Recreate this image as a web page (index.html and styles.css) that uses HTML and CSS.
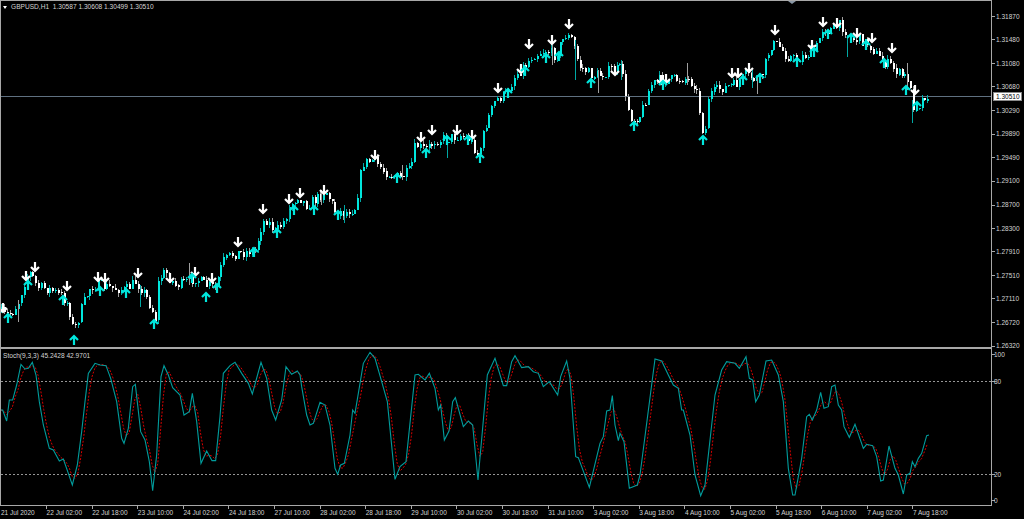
FILE: index.html
```html
<!DOCTYPE html>
<html lang="en">
<head>
    <meta charset="UTF-8">
    <title>GBPUSD,H1</title>
    <link rel="stylesheet" href="styles.css">
</head>
<body>
    <div class="terminal">
        <div class="pane">
            <div class="plot plot-main">
                <div class="legend legend-main"><span class="legend-arrow"></span>GBPUSD,H1&nbsp;&nbsp;1.30587 1.30608 1.30499 1.30510</div>
                <svg id="priceChart" width="990" height="346" viewBox="1 1 990 346"></svg>
            </div>
            <svg class="axis" width="32" height="348" viewBox="992 0 32 348">
                <g class="axis-ticks" id="priceTicks"></g>
                <text x="996" y="18.5">1.31870</text>
                <text x="996" y="41.5">1.31480</text>
                <text x="996" y="65.5">1.31080</text>
                <text x="996" y="88.5">1.30680</text>
                <text x="996" y="112.5">1.30290</text>
                <text x="996" y="136">1.29890</text>
                <text x="996" y="159.5">1.29490</text>
                <text x="996" y="183">1.29100</text>
                <text x="996" y="207">1.28700</text>
                <text x="996" y="230.5">1.28300</text>
                <text x="996" y="253.5">1.27910</text>
                <text x="996" y="277.5">1.27510</text>
                <text x="996" y="300.5">1.27110</text>
                <text x="996" y="324.5">1.26720</text>
                <text x="996" y="348">1.26320</text>
                <rect class="price-box" x="993.5" y="92.5" width="28" height="8"></rect>
                <text class="price-box-text" x="996" y="99">1.30510</text>
            </svg>
        </div>
        <div class="pane">
            <div class="plot plot-sub">
                <div class="legend legend-sub">Stoch(9,3,3) 45.2428 42.9701</div>
                <svg id="stochChart" width="990" height="156" viewBox="1 349 990 156"></svg>
            </div>
            <svg class="axis" width="32" height="157" viewBox="992 349 32 157">
                <g class="axis-ticks" id="stochTicks"></g>
                <text x="994" y="356.5">100</text>
                <text x="994" y="384">80</text>
                <text x="994" y="476.5">20</text>
                <text x="994" y="503">0</text>
            </svg>
        </div>
        <div class="time-axis">
            <span class="time-label">21 Jul 2020</span>
            <span class="time-label">22 Jul 02:00</span>
            <span class="time-label">22 Jul 18:00</span>
            <span class="time-label">23 Jul 10:00</span>
            <span class="time-label">24 Jul 02:00</span>
            <span class="time-label">24 Jul 18:00</span>
            <span class="time-label">27 Jul 10:00</span>
            <span class="time-label">28 Jul 02:00</span>
            <span class="time-label">28 Jul 18:00</span>
            <span class="time-label">29 Jul 10:00</span>
            <span class="time-label">30 Jul 02:00</span>
            <span class="time-label">30 Jul 18:00</span>
            <span class="time-label">31 Jul 10:00</span>
            <span class="time-label">3 Aug 02:00</span>
            <span class="time-label">3 Aug 18:00</span>
            <span class="time-label">4 Aug 10:00</span>
            <span class="time-label">5 Aug 02:00</span>
            <span class="time-label">5 Aug 18:00</span>
            <span class="time-label">6 Aug 10:00</span>
            <span class="time-label">7 Aug 02:00</span>
            <span class="time-label">7 Aug 18:00</span>
        </div>
    </div>
    <script src="chart.js"></script>
</body>
</html>
```
FILE: styles.css
```css
* {
    margin: 0;
    padding: 0;
    box-sizing: border-box;
}

body {
    background-color: #000;
    overflow: hidden;
    font-family: "Liberation Sans", Arial, sans-serif;
}

.terminal {
    width: 1024px;
    height: 519px;
    display: flex;
    flex-direction: column;
}

.pane {
    display: flex;
}

.plot {
    position: relative;
    width: 992px;
    border-left: 1px solid #a8a8a8;
    border-right: 1px solid #a8a8a8;
}

.plot svg {
    display: block;
}

.plot-main {
    border-top: 1px solid #a8a8a8;
    border-bottom: 2px solid #a8a8a8;
}

.plot-sub {
    border-bottom: 1px solid #a8a8a8;
}

.legend {
    position: absolute;
    color: #d4d4d4;
    font-size: 6.6px;
    line-height: 8px;
    white-space: nowrap;
}

.legend-main {
    top: 2px;
    left: 2px;
}

.legend-sub {
    top: 3px;
    left: 2px;
}

.legend-arrow {
    display: inline-block;
    width: 0;
    height: 0;
    margin-right: 4px;
    vertical-align: 0.5px;
    border-left: 2.5px solid transparent;
    border-right: 2.5px solid transparent;
    border-top: 3px solid #fff;
}

.axis {
    display: block;
    flex: none;
    overflow: visible;
}

.axis text {
    fill: #d4d4d4;
    font-size: 6.5px;
}

.axis-ticks line {
    stroke: #a8a8a8;
    stroke-width: 1;
}

.price-box {
    fill: #fff;
    stroke: #888;
    stroke-width: 1;
}

.axis .price-box-text {
    fill: #000;
}

.time-axis {
    display: flex;
    height: 13px;
    width: 1024px;
}

.time-label {
    position: relative;
    flex: none;
    width: 45.6px;
    padding-left: 1px;
    padding-top: 3px;
    color: #d4d4d4;
    font-size: 6.5px;
    line-height: 8px;
    white-space: nowrap;
}

.time-label::before {
    content: "";
    position: absolute;
    left: 0.5px;
    top: 0;
    width: 1px;
    height: 3px;
    background-color: #a8a8a8;
}

.time-label:first-child::before {
    display: none;
}

.price-line {
    stroke: #5f7080;
    stroke-width: 1;
}

.wick-up {
    stroke: #00a8a4;
    stroke-width: 1;
}

.wick-down {
    stroke: #a0a0a0;
    stroke-width: 1;
}

.body-up {
    fill: #00e6dc;
}

.body-down {
    fill: #fff;
}

.arrow {
    fill: none;
    stroke-width: 2.2;
}

.arrow-down {
    stroke: #fff;
}

.arrow-up {
    stroke: #00e6dc;
}

.level {
    stroke: #969696;
    stroke-width: 1;
    stroke-dasharray: 2 2;
}

.stoch-main {
    fill: none;
    stroke: #009c9c;
    stroke-width: 1.1;
}

.stoch-signal {
    fill: none;
    stroke: #d80000;
    stroke-width: 1;
    stroke-dasharray: 2 1.5;
}

.shift-mark {
    fill: #8896a4;
}
```
FILE: chart.js
```js
const BAR_STEP = 2.85;
const BAR_COUNT = 326;
const NS = 'http://www.w3.org/2000/svg';

// close price of the candles, in page pixels [x, y]
const pricePath = [
    [0,312],[5,316],[12,312],[18,302],[25,278],[30,273],[37,287],[45,288],[55,292],[62,297],[68,305],[73,330],
    [76,325],[82,305],[90,287],[100,285],[110,288],[125,290],[135,282],[142,290],[150,305],[155,318],[158,280],
    [165,272],[175,285],[185,283],[195,278],[205,285],[215,288],[222,262],[232,254],[245,252],[255,250],[260,228],
    [265,218],[275,232],[283,222],[290,205],[298,195],[305,205],[315,200],[325,190],[335,212],[345,213],[355,207],
    [362,163],[372,160],[385,172],[400,178],[410,170],[415,145],[425,150],[435,140],[450,138],[460,135],[470,140],
    [478,155],[485,125],[495,100],[505,95],[515,75],[525,65],[532,55],[545,50],[555,55],[565,35],[572,40],[578,65],
    [590,75],[600,75],[610,70],[622,68],[625,100],[632,120],[640,115],[650,85],[660,80],[670,80],[685,78],[695,85],
    [700,115],[704,140],[708,95],[720,88],[735,85],[745,75],[752,78],[760,80],[770,45],[778,45],[785,55],[795,60],
    [805,55],[815,50],[822,28],[830,30],[840,25],[850,38],[860,40],[870,45],[880,60],[890,65],[900,75],[908,78],
    [912,105],[918,105],[925,95],[930,94]
];

// the long shadows: [x, top, bottom]
const longWicks = [
    [18,300,322],[140,285,307],[189,263,285],[289,205,222],[321,190,205],[344,205,223],[402,165,180],[447,135,158],
    [552,45,65],[575,40,80],[598,70,93],[621,60,80],[687,63,85],[752,70,88],[757,75,94],[847,35,57],[907,63,90],[912,100,123]
];

const downArrows = [
    [3,308],[26,276],[35,267],[67,286],[98,277],[105,278],[138,273],[170,278],[195,272],[212,278],[238,242],[263,209],
    [289,199],[300,193],[324,190],[375,155],[421,137],[432,130],[457,130],[472,135],[498,88],[521,69],[529,44],[552,40],
    [569,24],[615,71],[661,80],[666,79],[732,73],[738,73],[749,68],[775,30],[812,45],[823,22],[837,23],[857,33],[872,38],
    [892,48],[915,90]
];

const upArrows = [
    [8,318],[28,285],[63,300],[74,340],[100,291],[126,293],[154,324],[192,278],[206,297],[217,288],[254,252],[277,233],
    [294,210],[314,210],[338,215],[397,178],[426,153],[447,140],[468,140],[480,158],[508,93],[525,71],[546,58],[559,56],
    [591,83],[634,126],[663,85],[703,140],[743,80],[760,78],[797,62],[814,52],[828,34],[851,38],[866,45],[884,63],[906,90],
    [917,106]
];

// %K line, read off the reference in three stretches: [x, y] with x = left + X/3, y = 345 + Y/3
const stochStretches = [
    { left: 0, points: [
        [0,195],[8,195],[20,228],[28,165],[38,165],[50,120],[63,58],[75,72],[85,70],[97,52],[108,90],[118,170],[130,240],
        [148,310],[160,315],[178,348],[190,342],[205,385],[217,420],[232,360],[245,260],[255,170],[265,85],[285,55],[300,60],
        [318,62],[332,100],[350,170],[365,280],[372,295],[385,250],[398,125],[406,118],[422,260],[435,285],[448,350],[458,437],
        [470,330],[483,95],[492,62],[505,90],[518,128],[540,150],[552,210],[568,200],[577,145],[590,230],[603,355],[620,318],
        [636,347],[647,347],[660,215],[670,85],[690,62],[705,52],[725,85],[745,115],[757,147],[783,52],[800,100],[815,195],
        [827,225],[845,165],[858,65],[875,88],[892,78],[900,90]
    ] },
    { left: 300, points: [
        [5,125],[20,210],[30,240],[40,235],[60,172],[75,180],[90,240],[105,370],[113,388],[122,360],[133,355],[150,270],
        [158,195],[165,205],[190,55],[210,22],[225,40],[245,110],[262,170],[285,403],[300,365],[318,350],[345,90],[355,88],
        [375,105],[388,85],[405,130],[415,195],[422,180],[433,285],[447,258],[458,170],[466,158],[490,245],[505,228],[518,240],
        [534,405],[547,260],[562,90],[585,40],[610,122],[620,122],[635,50],[645,32],[665,68],[685,65],[700,80],[715,85],
        [730,125],[748,110],[773,150],[782,95],[800,48],[810,100],[827,335],[835,338],[868,427],[900,295],[910,275],[920,198],
        [930,195],[937,152],[945,240],[955,287]
    ] },
    { left: 620, points: [
        [0,265],[12,290],[28,430],[52,420],[60,390],[105,42],[125,48],[145,90],[160,120],[175,130],[185,195],[190,195],
        [210,270],[225,390],[242,452],[255,420],[285,150],[305,75],[320,50],[345,55],[358,70],[378,35],[388,100],[398,105],
        [407,170],[418,150],[438,48],[455,45],[475,90],[490,170],[505,370],[518,450],[525,450],[545,340],[560,215],[568,208],
        [577,225],[590,195],[602,142],[612,190],[625,185],[635,125],[645,120],[655,180],[665,195],[672,245],[688,277],[705,238],
        [730,310],[740,298],[758,302],[770,335],[782,408],[790,405],[807,303],[825,370],[835,390],[850,447],[860,390],[870,385],
        [877,350],[885,365],[895,340],[905,325],[920,272],[927,270]
    ] }
];

let seed = 7;
function rand() {
    seed = (seed * 16807) % 2147483647;
    return seed / 2147483647;
}

function add(parent, tag, attrs) {
    const el = document.createElementNS(NS, tag);
    for (const key in attrs) el.setAttribute(key, attrs[key]);
    parent.appendChild(el);
    return el;
}

function valueAt(path, x) {
    for (let i = 1; i < path.length; i++) {
        if (x <= path[i][0]) {
            const [x0, y0] = path[i - 1];
            const [x1, y1] = path[i];
            return y0 + (y1 - y0) * (x - x0) / (x1 - x0);
        }
    }
    return path[path.length - 1][1];
}

function drawCandles(svg) {
    let open = valueAt(pricePath, 0);
    for (let i = 0; i < BAR_COUNT; i++) {
        const x = Math.round(1 + i * BAR_STEP);
        const close = valueAt(pricePath, 1 + i * BAR_STEP) + (rand() - 0.5) * 11;
        const up = close < open;
        const top = Math.min(open, close);
        const bottom = Math.max(open, close);
        add(svg, 'line', {
            class: up ? 'wick-up' : 'wick-down',
            x1: x + 0.5,
            x2: x + 0.5,
            y1: Math.round(top - rand() * 4),
            y2: Math.round(bottom + rand() * 4)
        });
        add(svg, 'rect', {
            class: up ? 'body-up' : 'body-down',
            x: x,
            y: Math.round(top),
            width: 2,
            height: Math.max(1, Math.round(bottom - top))
        });
        open = close;
    }
    longWicks.forEach(([x, top, bottom], i) => {
        add(svg, 'line', { class: i % 2 ? 'wick-up' : 'wick-down', x1: x + 0.5, x2: x + 0.5, y1: top, y2: bottom });
    });
}

function drawArrows(svg) {
    downArrows.forEach(([x, y]) => {
        add(svg, 'path', { class: 'arrow arrow-down', d: `M${x} ${y - 5}V${y + 3}M${x - 4} ${y}L${x} ${y + 4}L${x + 4} ${y}` });
    });
    upArrows.forEach(([x, y]) => {
        add(svg, 'path', { class: 'arrow arrow-up', d: `M${x} ${y + 5}V${y - 3}M${x - 4} ${y}L${x} ${y - 4}L${x + 4} ${y}` });
    });
}

function drawStoch(svg) {
    const main = [];
    stochStretches.forEach(stretch => {
        stretch.points.forEach(([px, py]) => {
            const x = stretch.left + px / 3;
            if (!main.length || x > main[main.length - 1][0]) main.push([x, 345 + py / 3]);
        });
    });

    const signal = [];
    for (let i = 0; i < BAR_COUNT; i++) {
        const x = 1 + i * BAR_STEP;
        const avg = (valueAt(main, x) + valueAt(main, x - BAR_STEP) + valueAt(main, x - 2 * BAR_STEP)) / 3;
        signal.push([x, avg]);
    }

    add(svg, 'line', { class: 'level', x1: 1, x2: 991, y1: 381.5, y2: 381.5 });
    add(svg, 'line', { class: 'level', x1: 1, x2: 991, y1: 474.5, y2: 474.5 });
    add(svg, 'polyline', { class: 'stoch-signal', points: signal.join(' ') });
    add(svg, 'polyline', { class: 'stoch-main', points: main.join(' ') });
}

function drawTicks(group, ys) {
    ys.forEach(y => add(group, 'line', { x1: 992, x2: 995, y1: y, y2: y }));
}

const priceChart = document.getElementById('priceChart');
add(priceChart, 'line', { class: 'price-line', x1: 1, x2: 991, y1: 96.5, y2: 96.5 });
add(priceChart, 'polygon', { class: 'shift-mark', points: '788,1 796,1 792,4' });
drawCandles(priceChart);
drawArrows(priceChart);
drawStoch(document.getElementById('stochChart'));
drawTicks(document.getElementById('priceTicks'), [16.5, 39.5, 63.5, 86.5, 110.5, 134.5, 157.5, 181.5, 205.5, 228.5, 251.5, 275.5, 298.5, 322.5, 346.5]);
drawTicks(document.getElementById('stochTicks'), [354.5, 381.5, 474.5, 500.5]);
```
